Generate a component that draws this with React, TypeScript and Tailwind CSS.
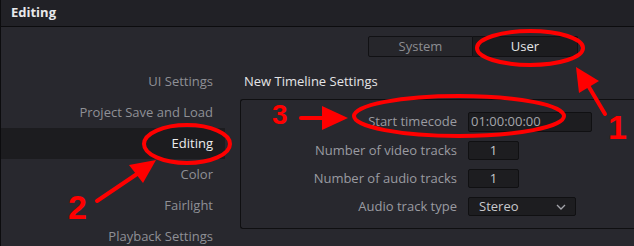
import React from "react";

const navItems = [
  "UI Settings",
  "Project Save and Load",
  "Editing",
  "Color",
  "Fairlight",
  "Playback Settings",
];

const ACTIVE = "Editing";

function Annotations() {
  return (
    <svg
      className="absolute inset-0 pointer-events-none"
      width="634"
      height="246"
      viewBox="0 0 634 246"
    >
      {/* ellipses */}
      <ellipse cx="529" cy="48" rx="53" ry="17" fill="none" stroke="#ff0000" strokeWidth="4" />
      <ellipse cx="186" cy="144" rx="43" ry="19" fill="none" stroke="#ff0000" strokeWidth="4" />
      <ellipse cx="458" cy="116" rx="105" ry="20" fill="none" stroke="#ff0000" strokeWidth="4" />
      {/* arrow 1 */}
      <line x1="604" y1="114" x2="585" y2="82" stroke="#ff0000" strokeWidth="4" strokeLinecap="round" />
      <polygon points="575,67 598,81 578,93" fill="#ff0000" />
      {/* arrow 2 */}
      <line x1="96" y1="201" x2="136" y2="174" stroke="#ff0000" strokeWidth="4" strokeLinecap="round" />
      <polygon points="155,160 128,165 142,183" fill="#ff0000" />
      {/* arrow 3 */}
      <line x1="300" y1="118" x2="326" y2="118" stroke="#ff0000" strokeWidth="4" strokeLinecap="round" />
      <polygon points="321,106 347,118 321,130" fill="#ff0000" />
    </svg>
  );
}

export default function App() {
  return (
    <div className="relative w-[634px] h-[246px] overflow-hidden bg-[#28282e] border-l border-[#0c0c0e] font-['Open_Sans',sans-serif] text-[13px]">
      {/* Title bar */}
      <div className="h-[27px] bg-[#212126] border-b border-[#0c0c0e] flex items-center pl-[10px]">
        <span className="text-[#e8e8ea] font-bold text-[13px]">Editing</span>
      </div>

      {/* System / User toggle */}
      <div className="flex pl-[367px] pt-[9px]">
        <div className="w-[105px] h-[21px] flex items-center justify-center bg-[#26262b] border border-[#111114] rounded-l-[2px] text-[#8c8d92]">
          System
        </div>
        <div className="w-[105px] h-[21px] flex items-center justify-center bg-[#1c1c1f] border border-l-0 border-[#111114] rounded-r-[2px] text-[#e6e6e8]">
          User
        </div>
      </div>

      <div className="flex mt-[9px]">
        {/* Left nav */}
        <div className="w-[224px] flex flex-col shrink-0">
          {navItems.map((item) => (
            <div
              key={item}
              className={`h-[31px] flex items-center justify-end pr-[12px] ${
                item === ACTIVE ? "bg-[#1c1c1f] text-[#ececee]" : "text-[#8f9096]"
              }`}
            >
              {item}
            </div>
          ))}
        </div>

        {/* Right content */}
        <div className="ml-[15px] flex-1 flex flex-col">
          <div className="h-[33px] flex items-center pl-[4px] pb-[1px] text-[#e4e4e6]">
            New Timeline Settings
          </div>
          <div className="h-[130px] border-t border-l border-b border-[#0f0f11] rounded-tl-[3px] rounded-bl-[3px] pt-[12px]">
            <div className="flex items-center h-[20px]">
              <div className="w-[216px] text-right text-[#9a9ba1]">Start timecode</div>
              <div className="ml-[11px] w-[124px] h-[20px] bg-[#1d1d20] border border-[#101012] rounded-[2px] flex items-center pl-[2px] text-[#a4a5ab]">
                01:00:00:00
              </div>
            </div>
            <div className="flex items-center h-[19px] mt-[9px]">
              <div className="w-[216px] text-right text-[#9a9ba1]">Number of video tracks</div>
              <div className="ml-[11px] w-[51px] h-[19px] bg-[#1d1d20] border border-[#101012] rounded-[2px] flex items-center justify-center text-[#c8c9cd]">
                1
              </div>
            </div>
            <div className="flex items-center h-[19px] mt-[9px]">
              <div className="w-[216px] text-right text-[#9a9ba1]">Number of audio tracks</div>
              <div className="ml-[11px] w-[51px] h-[19px] bg-[#1d1d20] border border-[#101012] rounded-[2px] flex items-center justify-center text-[#c8c9cd]">
                1
              </div>
            </div>
            <div className="flex items-center h-[19px] mt-[9px]">
              <div className="w-[216px] text-right text-[#9a9ba1]">Audio track type</div>
              <div className="ml-[11px] w-[108px] h-[19px] bg-[#1d1d20] border border-[#101012] rounded-[2px] flex items-center justify-between pl-[10px] pr-[9px] text-[#c8c9cd]">
                <span>Stereo</span>
                <svg width="10" height="6" viewBox="0 0 10 6">
                  <path d="M1 1 L5 5 L9 1" fill="none" stroke="#a4a5ab" strokeWidth="1.3" />
                </svg>
              </div>
            </div>
          </div>
        </div>
      </div>

      <Annotations />

      {/* annotation numbers */}
      <span className="absolute left-[271px] top-[101px] text-[#ff0000] font-bold text-[28px] leading-none font-['Liberation_Sans',sans-serif]">
        3
      </span>
      <span className="absolute left-[67px] top-[190px] text-[#ff0000] font-bold text-[34px] leading-none font-['Liberation_Sans',sans-serif]">
        2
      </span>
      <span className="absolute left-[607px] top-[110px] text-[#ff0000] font-bold text-[34px] leading-none font-['Liberation_Sans',sans-serif]">
        1
      </span>
    </div>
  );
}
